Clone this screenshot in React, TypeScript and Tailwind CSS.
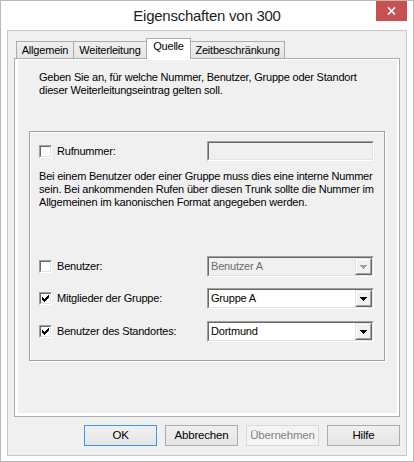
import { FC, ReactNode } from 'react';

// classic 7x7 check glyph, one rect per pixel
const CHECK_ROWS = [
  '......#',
  '.....##',
  '#...###',
  '##.###.',
  '#####..',
  '.###...',
  '..#....',
];

const checkPath = CHECK_ROWS.flatMap((row, y) =>
  row.split('').map((c, x) => (c === '#' ? `M${x} ${y}h1v1h-1z` : '')),
).join('');

const arrowPath = 'M0 0h7v1h-1v1h-1v1h-1v1h-1v-1h-1v-1h-1v-1h-1z';

const Checkbox: FC<{ checked?: boolean }> = ({ checked }) => (
  <span className="flex h-[13px] w-[13px] shrink-0 border border-t-[#a0a0a0] border-l-[#a0a0a0] border-r-white border-b-white">
    <span className="flex flex-1 items-center justify-center border border-t-[#696969] border-l-[#696969] border-r-[#e3e3e3] border-b-[#e3e3e3] bg-white">
      {checked && (
        <svg width="7" height="7" viewBox="0 0 7 7">
          <path d={checkPath} fill="#000" />
        </svg>
      )}
    </span>
  </span>
);

type SunkenProps = {
  height: string;
  bg: string;
  children?: ReactNode;
};

// 2px sunken client edge used by edits and combos
const Sunken: FC<SunkenProps> = ({ height, bg, children }) => (
  <div
    className={`flex w-[167px] ${height} border border-t-[#a0a0a0] border-l-[#a0a0a0] border-r-white border-b-white`}
  >
    <div
      className={`flex flex-1 border border-t-[#696969] border-l-[#696969] border-r-[#e3e3e3] border-b-[#e3e3e3] ${bg}`}
    >
      {children}
    </div>
  </div>
);

const Combo: FC<{ value: string; disabled?: boolean }> = ({
  value,
  disabled,
}) => (
  <Sunken height="h-[21px]" bg={disabled ? 'bg-[#f0f0f0]' : 'bg-white'}>
    <span
      className={`flex flex-1 items-center pl-[2px] ${
        disabled ? 'text-[#6d6d6d]' : 'text-black'
      }`}
    >
      {value}
    </span>
    <span className="flex w-[17px] border border-t-[#e3e3e3] border-l-[#e3e3e3] border-r-[#696969] border-b-[#696969]">
      <span className="flex flex-1 items-center justify-center border border-t-white border-l-white border-r-[#a0a0a0] border-b-[#a0a0a0] bg-[#f0f0f0]">
        <svg width="7" height="4" viewBox="0 0 7 4">
          <path d={arrowPath} fill={disabled ? '#a0a0a0' : '#000'} />
        </svg>
      </span>
    </span>
  </Sunken>
);

type RowProps = {
  label: string;
  checked?: boolean;
  children: ReactNode;
  className?: string;
};

const Row: FC<RowProps> = ({ label, checked, children, className }) => (
  <div className={`flex items-center ${className ?? ''}`}>
    <div className="flex w-[168px] items-center gap-[5px]">
      <Checkbox checked={checked} />
      <span>{label}</span>
    </div>
    {children}
  </div>
);

type TabProps = {
  label: string;
  width: string;
  selected?: boolean;
  first?: boolean;
};

const Tab: FC<TabProps> = ({ label, width, selected, first }) => (
  <div
    className={`flex justify-center border-x border-t border-[#acacac] ${width} ${
      first ? '' : '-ml-[1px]'
    } ${
      selected
        ? 'relative z-10 -mb-[1px] h-[21px] bg-white pt-[1px]'
        : 'h-[17px] bg-linear-to-b from-[#f0f0f0] to-[#e5e5e5] pt-[2px]'
    }`}
  >
    {label}
  </div>
);

type DialogButtonProps = {
  label: string;
  isDefault?: boolean;
  disabled?: boolean;
};

const DialogButton: FC<DialogButtonProps> = ({
  label,
  isDefault,
  disabled,
}) => (
  <button
    type="button"
    disabled={disabled}
    className={`flex h-[21px] w-[73px] items-center justify-center border text-[11.5px] ${
      isDefault
        ? 'border-[#3399ff]'
        : disabled
          ? 'border-[#d9d9d9]'
          : 'border-[#acacac]'
    } ${
      disabled
        ? 'bg-[#f4f4f4] text-[#838383]'
        : 'bg-linear-to-b from-[#f0f0f0] to-[#e5e5e5] text-black'
    }`}
  >
    {label}
  </button>
);

const App: FC = () => {
  return (
    <div className="flex h-[462px] w-[414px] flex-col border border-[#b9b9b9] bg-white font-['Liberation_Sans',Arial,sans-serif] text-[11px] leading-[13px] tracking-[-0.2px] text-black">
      <div className="grid h-[29px] grid-cols-[1fr_auto_1fr]">
        <div />
        <div className="text-[15px] leading-[29px] tracking-[-0.25px] text-[#1e1e1e]">
          Eigenschaften von 300
        </div>
        <div className="flex justify-end pr-[6px]">
          <div className="flex h-[20px] w-[31px] items-center justify-center bg-[#c75050]">
            <svg width="9" height="8" viewBox="0 0 9 8">
              <path
                d="M1 0.5l7 7M8 0.5l-7 7"
                stroke="#fff"
                strokeWidth="1.7"
              />
            </svg>
          </div>
        </div>
      </div>

      <div className="mx-[6px] mb-[5px] flex flex-1 flex-col border border-[#c9c9c9] bg-[#f0f0f0]">
        <div className="ml-[6px] mt-[7px] w-[386px]">
          <div className="flex h-[20px] items-end pl-[2px]">
            <Tab label="Allgemein" width="w-[58px]" first />
            <Tab label="Weiterleitung" width="w-[74px]" />
            <Tab label="Quelle" width="w-[45px]" selected />
            <Tab label="Zeitbeschränkung" width="w-[95px]" />
          </div>

          <div className="flex h-[359px] border border-[#adadad] bg-white">
            <div className="mb-[3px] ml-[3px] mr-[2px] mt-[1px] flex flex-1 flex-col bg-[#f0f0f0]">
              <p className="pl-[21px] pt-[11px] whitespace-nowrap">
                Geben Sie an, für welche Nummer, Benutzer, Gruppe oder Standort
                <br />
                dieser Weiterleitungseintrag gelten soll.
              </p>

              <div className="ml-[11px] mt-[34px] h-[230px] w-[356px] border border-[#a0a0a0] pl-[9px] pt-[9px] shadow-[inset_1px_1px_0_#ffffff,1px_1px_0_#ffffff]">
                <Row label="Rufnummer:">
                  <Sunken height="h-[20px]" bg="bg-[#f0f0f0]" />
                </Row>

                <p className="mt-[9px] whitespace-nowrap">
                  Bei einem Benutzer oder einer Gruppe muss dies eine interne
                  Nummer
                  <br />
                  sein. Bei ankommenden Rufen über diesen Trunk sollte die
                  Nummer im
                  <br />
                  Allgemeinen im kanonischen Format angegeben werden.
                </p>

                <Row label="Benutzer:" className="mt-[47px]">
                  <Combo value="Benutzer A" disabled />
                </Row>
                <Row label="Mitglieder der Gruppe:" checked className="mt-[11px]">
                  <Combo value="Gruppe A" />
                </Row>
                <Row
                  label="Benutzer des Standortes:"
                  checked
                  className="mt-[12px]"
                >
                  <Combo value="Dortmund" />
                </Row>
              </div>
            </div>
          </div>

          <div className="mt-[8px] flex justify-end gap-[8px]">
            <DialogButton label="OK" isDefault />
            <DialogButton label="Abbrechen" />
            <DialogButton label="Übernehmen" disabled />
            <DialogButton label="Hilfe" />
          </div>
        </div>
      </div>
    </div>
  );
};

export default App;
